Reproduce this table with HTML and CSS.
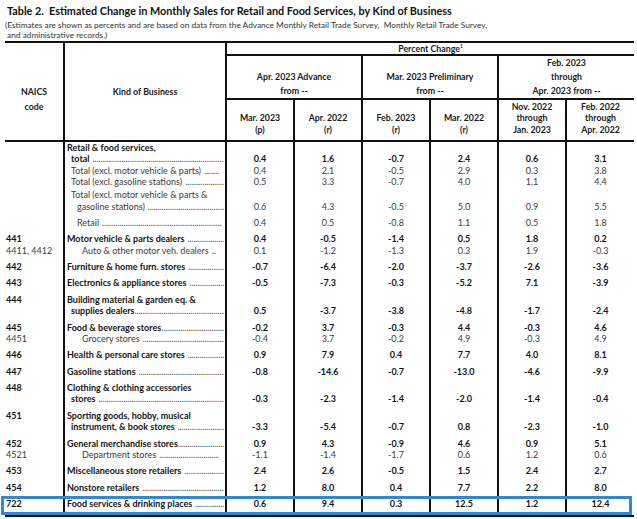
FILE: index.html
```html
<!DOCTYPE html>
<html lang="en">
<head>
<meta charset="utf-8">
<title>Table 2. Estimated Change in Monthly Sales</title>
<link rel="stylesheet" href="styles.css">
</head>
<body>
<div class="page">
  <h1 class="title">Table 2.&nbsp; Estimated Change in Monthly Sales for Retail and Food Services, by Kind of Business</h1>
  <p class="note">(Estimates are shown as percents and are based on data from the Advance Monthly Retail Trade Survey,&nbsp; Monthly Retail Trade Survey,<br>&nbsp;and administrative records.)</p>
  <table class="tbl">
    <colgroup>
      <col class="c-code"><col class="c-kind">
      <col class="c-val"><col class="c-val"><col class="c-val"><col class="c-val"><col class="c-val"><col class="c-val">
    </colgroup>
    <thead>
      <tr class="hr1">
        <th rowspan="3" class="h-code">NAICS<br>code</th>
        <th rowspan="3" class="h-kind">Kind of Business</th>
        <th colspan="6" class="h-pc">Percent Change<sup>1</sup></th>
      </tr>
      <tr class="hr2">
        <th colspan="2" class="h-grp">Apr. 2023 Advance<br>from --</th>
        <th colspan="2" class="h-grp">Mar. 2023 Preliminary<br>from --</th>
        <th colspan="2" class="h-grp end">Feb. 2023<br>through<br>Apr. 2023 from --</th>
      </tr>
      <tr class="hr3">
        <th class="h-sub">Mar. 2023<br>(p)</th>
        <th class="h-sub">Apr. 2022<br>(r)</th>
        <th class="h-sub">Feb. 2023<br>(r)</th>
        <th class="h-sub">Mar. 2022<br>(r)</th>
        <th class="h-sub">Nov. 2022<br>through<br>Jan. 2023</th>
        <th class="h-sub end">Feb. 2022<br>through<br>Apr. 2022</th>
      </tr>
    </thead>
    <tbody>
      <tr class="b">
        <td class="code"></td>
        <td class="kind"><div class="ln">Retail &amp; food services,</div><div class="ln i1 ld"><span>total</span></div></td>
        <td>0.4</td><td>1.6</td><td>-0.7</td><td>2.4</td><td>0.6</td><td class="end">3.1</td>
      </tr>
      <tr>
        <td class="code"></td>
        <td class="kind"><div class="ln i1 ld short2"><span>Total (excl. motor vehicle &amp; parts)</span></div></td>
        <td>0.4</td><td>2.1</td><td>-0.5</td><td>2.9</td><td>0.3</td><td class="end">3.8</td>
      </tr>
      <tr>
        <td class="code"></td>
        <td class="kind"><div class="ln i1 ld"><span>Total (excl. gasoline stations)</span></div></td>
        <td>0.5</td><td>3.3</td><td>-0.7</td><td>4.0</td><td>1.1</td><td class="end">4.4</td>
      </tr>
      <tr class="g1">
        <td class="code"></td>
        <td class="kind"><div class="ln i1">Total (excl. motor vehicle &amp; parts &amp;</div><div class="ln i2 ld"><span>gasoline stations)</span></div></td>
        <td>0.6</td><td>4.3</td><td>-0.5</td><td>5.0</td><td>0.9</td><td class="end">5.5</td>
      </tr>
      <tr class="g">
        <td class="code"></td>
        <td class="kind"><div class="ln i2 ld short1"><span>Retail</span></div></td>
        <td>0.4</td><td>0.5</td><td>-0.8</td><td>1.1</td><td>0.5</td><td class="end">1.8</td>
      </tr>
      <tr class="b g">
        <td class="code">441</td>
        <td class="kind"><div class="ln ld"><span>Motor vehicle &amp; parts dealers</span></div></td>
        <td>0.4</td><td>-0.5</td><td>-1.4</td><td>0.5</td><td>1.8</td><td class="end">0.2</td>
      </tr>
      <tr>
        <td class="code">4411, 4412</td>
        <td class="kind"><div class="ln i3 ld short3"><span>Auto &amp; other motor veh. dealers</span></div></td>
        <td>0.1</td><td>-1.2</td><td>-1.3</td><td>0.3</td><td>1.9</td><td class="end">-0.3</td>
      </tr>
      <tr class="b g">
        <td class="code">442</td>
        <td class="kind"><div class="ln ld"><span>Furniture &amp; home furn. stores</span></div></td>
        <td>-0.7</td><td>-6.4</td><td>-2.0</td><td>-3.7</td><td>-2.6</td><td class="end">-3.6</td>
      </tr>
      <tr class="b g">
        <td class="code">443</td>
        <td class="kind"><div class="ln ld"><span>Electronics &amp; appliance stores</span></div></td>
        <td>-0.5</td><td>-7.3</td><td>-0.3</td><td>-5.2</td><td>7.1</td><td class="end">-3.9</td>
      </tr>
      <tr class="b g">
        <td class="code">444</td>
        <td class="kind"><div class="ln">Building material &amp; garden eq. &amp;</div><div class="ln i1 ld tight"><span>supplies dealers</span></div></td>
        <td>0.5</td><td>-3.7</td><td>-3.8</td><td>-4.8</td><td>-1.7</td><td class="end">-2.4</td>
      </tr>
      <tr class="b g">
        <td class="code">445</td>
        <td class="kind"><div class="ln ld tight"><span>Food &amp; beverage stores</span></div></td>
        <td>-0.2</td><td>3.7</td><td>-0.3</td><td>4.4</td><td>-0.3</td><td class="end">4.6</td>
      </tr>
      <tr>
        <td class="code">4451</td>
        <td class="kind"><div class="ln i3 ld"><span>Grocery stores</span></div></td>
        <td>-0.4</td><td>3.7</td><td>-0.2</td><td>4.9</td><td>-0.3</td><td class="end">4.9</td>
      </tr>
      <tr class="b g">
        <td class="code">446</td>
        <td class="kind"><div class="ln ld"><span>Health &amp; personal care stores</span></div></td>
        <td>0.9</td><td>7.9</td><td>0.4</td><td>7.7</td><td>4.0</td><td class="end">8.1</td>
      </tr>
      <tr class="b g">
        <td class="code">447</td>
        <td class="kind"><div class="ln ld"><span>Gasoline stations</span></div></td>
        <td>-0.8</td><td>-14.6</td><td>-0.7</td><td>-13.0</td><td>-4.6</td><td class="end">-9.9</td>
      </tr>
      <tr class="b g">
        <td class="code">448</td>
        <td class="kind"><div class="ln">Clothing &amp; clothing accessories</div><div class="ln i1 ld"><span>stores</span></div></td>
        <td>-0.3</td><td>-2.3</td><td>-1.4</td><td>-2.0</td><td>-1.4</td><td class="end">-0.4</td>
      </tr>
      <tr class="b g">
        <td class="code">451</td>
        <td class="kind"><div class="ln">Sporting goods, hobby, musical</div><div class="ln i1 ld"><span>instrument, &amp; book stores</span></div></td>
        <td>-3.3</td><td>-5.4</td><td>-0.7</td><td>0.8</td><td>-2.3</td><td class="end">-1.0</td>
      </tr>
      <tr class="b g">
        <td class="code">452</td>
        <td class="kind"><div class="ln ld tight"><span>General merchandise stores</span></div></td>
        <td>0.9</td><td>4.3</td><td>-0.9</td><td>4.6</td><td>0.9</td><td class="end">5.1</td>
      </tr>
      <tr>
        <td class="code">4521</td>
        <td class="kind"><div class="ln i3 ld short2"><span>Department stores</span></div></td>
        <td>-1.1</td><td>-1.4</td><td>-1.7</td><td>0.6</td><td>1.2</td><td class="end">0.6</td>
      </tr>
      <tr class="b g">
        <td class="code">453</td>
        <td class="kind"><div class="ln ld"><span>Miscellaneous store retailers</span></div></td>
        <td>2.4</td><td>2.6</td><td>-0.5</td><td>1.5</td><td>2.4</td><td class="end">2.7</td>
      </tr>
      <tr class="b g">
        <td class="code">454</td>
        <td class="kind"><div class="ln ld"><span>Nonstore retailers</span></div></td>
        <td>1.2</td><td>8.0</td><td>0.4</td><td>7.7</td><td>2.2</td><td class="end">8.0</td>
      </tr>
      <tr class="b g last">
        <td class="code">722</td>
        <td class="kind"><div class="ln ld"><span>Food services &amp; drinking places</span></div></td>
        <td>0.6</td><td>9.4</td><td>0.3</td><td>12.5</td><td>1.2</td><td class="end">12.4</td>
      </tr>
    </tbody>
  </table>
  <div class="highlight" aria-hidden="true"></div>
</div>
</body>
</html>
```
FILE: styles.css
```css
* { box-sizing: border-box; }
html, body { margin: 0; padding: 0; background: #fff; }
body {
  font-family: "Lato", "Liberation Sans", sans-serif;
  color: #1a1a1a;
  width: 637px;
  height: 519px;
  overflow: hidden;
}
.page { position: relative; }

.title {
  margin: 0;
  padding: 4px 0 0 7px;
  font-size: 10.8px;
  line-height: 14px;
  font-weight: 700;
  color: #111;
  white-space: nowrap;
}
.note {
  margin: 1.75px 0 0 0;
  padding-left: 5px;
  font-size: 8.3px;
  line-height: 10.5px;
  color: #333;
  white-space: nowrap;
}

.tbl {
  margin-left: 5px;
  width: 629px;
  border-collapse: collapse;
  table-layout: fixed;
}
.c-code { width: 59px; }
.c-kind { width: 162px; }
.c-val { width: 68px; }

.tbl th, .tbl td { padding: 0; border: 0; }

/* header */
.tbl th {
  font-size: 8.8px;
  font-weight: 700;
  color: #1a1a1a;
  text-align: center;
  white-space: nowrap;
}
.tbl .hr1 th { border-top: 2px solid #111; }
.tbl .h-code, .tbl .h-kind {
  border-right: 2px solid #111;
  border-bottom: 2px solid #111;
  vertical-align: middle;
  line-height: 15px;
}
.tbl .h-code { padding-top: 16px; }
.tbl .h-pc {
  line-height: 11px;
  border-bottom: 2px solid #111;
}
.h-pc sup { font-size: 5px; vertical-align: 4px; line-height: 0; }
.tbl .h-grp {
  line-height: 14px;
  vertical-align: bottom;
  border-right: 2px solid #111;
  border-bottom: 2px solid #111;
}
.tbl .h-sub {
  line-height: 11.2px;
  vertical-align: bottom;
  padding-top: 1.4px;
  padding-bottom: 5px;
  border-right: 2px solid #111;
  border-bottom: 2px solid #111;
}
.tbl th.end { border-right: 0; }

/* body */
.tbl td {
  font-size: 9px;
  line-height: 11.5px;
  color: #3c3c3c;
  text-align: center;
  vertical-align: bottom;
  border-right: 2px solid #111;
  white-space: nowrap;
}
.tbl td.end { border-right: 0; }
.tbl td.code {
  text-align: left;
  vertical-align: top;
  padding-left: 1px;
}
.tbl td.kind {
  text-align: left;
  vertical-align: top;
  padding-left: 2px;
}
.tbl tr.b td { font-weight: 700; color: #141414; }
.tbl tr.g td { padding-top: 4.8px; }
.tbl tr.g1 td { padding-top: 1.5px; }
.tbl tr.last td { padding-bottom: 5.5px; border-bottom: 2px solid #111; }

.ln { overflow: hidden; }
.i1 { padding-left: 4px; }
.i2 { padding-left: 10px; }
.i3 { padding-left: 15px; }

.ld { display: flex; margin-right: 1px; }
.ld > span { flex: none; }
.ld::after {
  content: "........................................................................................................................................";
  flex: 1 1 0;
  min-width: 0;
  overflow: hidden;
  margin-left: 3px;
  font-weight: 400;
  letter-spacing: -0.2px;
  color: #555;
}
.ld.tight::after { margin-left: 0; }
.ld.short1 { margin-right: 3px; }
.ld.short2 { margin-right: 6px; }
.ld.short3 { margin-right: 9px; }

.highlight {
  position: absolute;
  left: 1px;
  top: 496px;
  width: 631px;
  height: 19px;
  border: 3px solid #2e88d5;
  pointer-events: none;
}
```
